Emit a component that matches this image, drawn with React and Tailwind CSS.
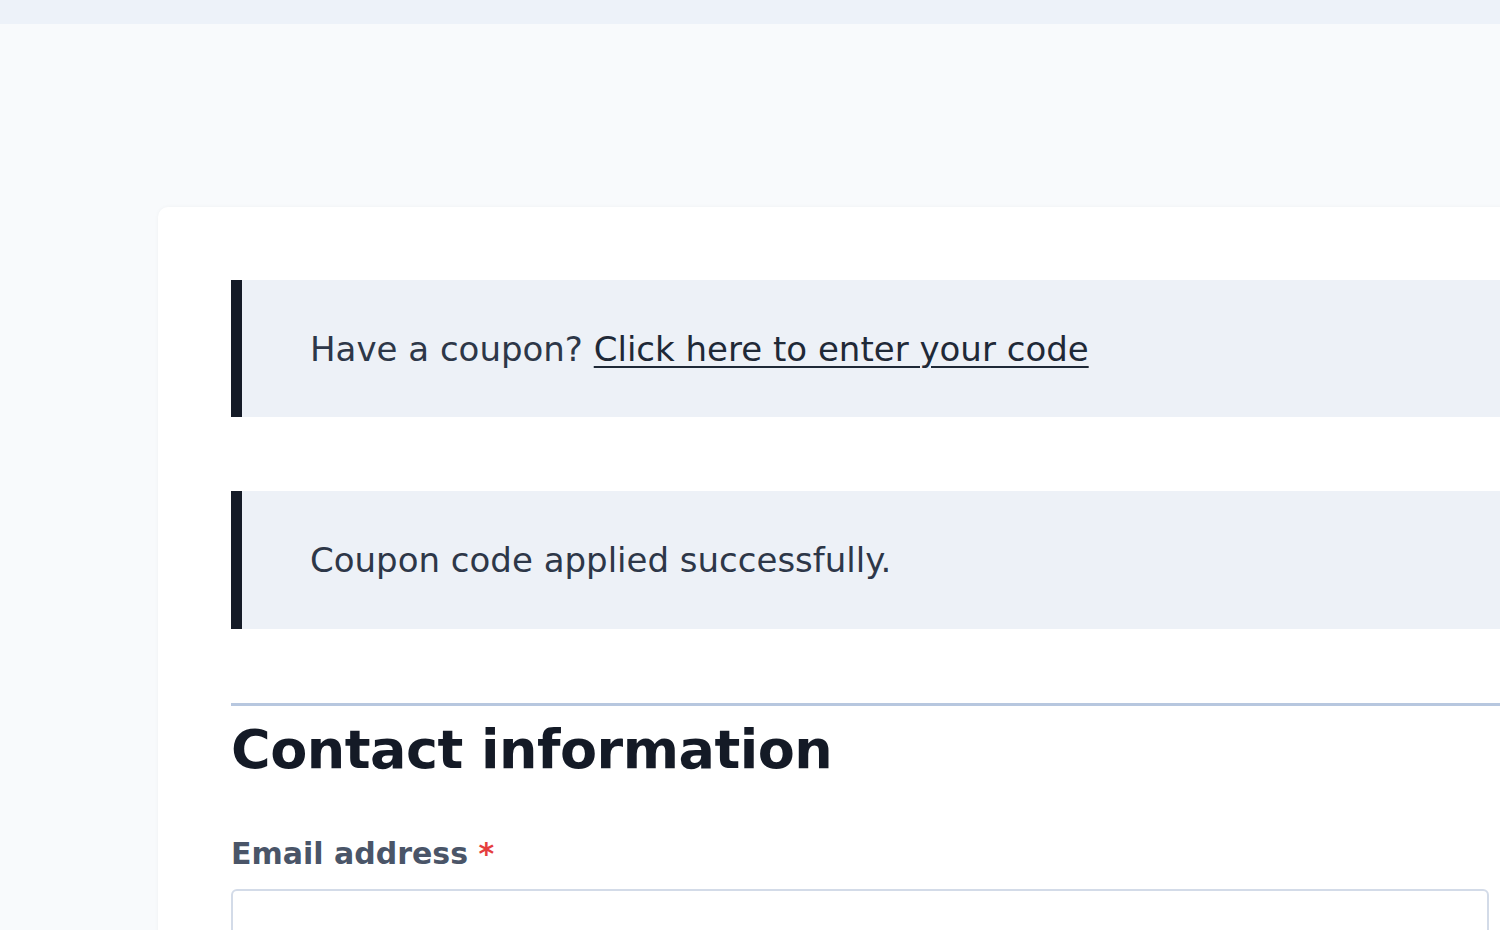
import React from "react";

export default function App() {
  const font = { fontFamily: '"DejaVu Sans", Verdana, sans-serif' };
  return (
    <div className="w-[1500px] h-[930px] overflow-hidden bg-[#f8fafc]" style={font}>
      <div className="h-[24px] bg-[#edf2f9]" />
      <div className="pt-[183px] pl-[158px]">
        <div className="w-[2000px] bg-white rounded-[10px] shadow-[0_0_4px_rgba(15,23,42,0.04)] px-[73px] pt-[73px] pb-[40px]">
          <div className="flex flex-col gap-[74px]">
            <div className="h-[137px] bg-[#edf1f7] border-l-[11px] border-[#151b27] flex items-center pl-[68px]">
              <p className="text-[34px] text-[#2d3748] leading-none">
                Have a coupon?{" "}
                <a href="#" className="underline underline-offset-[5px] decoration-[2px] text-[#1f2937]">
                  Click here to enter your code
                </a>
              </p>
            </div>
            <div className="h-[138px] bg-[#edf1f7] border-l-[11px] border-[#151b27] flex items-center pl-[68px]">
              <p className="text-[34px] text-[#2d3748] leading-none">Coupon code applied successfully.</p>
            </div>
          </div>
          <div className="mt-[74px] border-t-[3px] border-[#b7c7df]">
            <h2 className="text-[54px] font-bold text-[#141a26] leading-none pt-[17px] tracking-[-0.5px]">
              Contact information
            </h2>
            <label className="block mt-[62px] text-[30px] font-bold text-[#4a5568] leading-none">
              Email address <span className="text-[#e53e3e]">*</span>
            </label>
            <div className="mt-[20px] w-[1258px] h-[80px] border-2 border-[#d3dbe8] rounded-[6px] bg-white" />
          </div>
        </div>
      </div>
    </div>
  );
}
